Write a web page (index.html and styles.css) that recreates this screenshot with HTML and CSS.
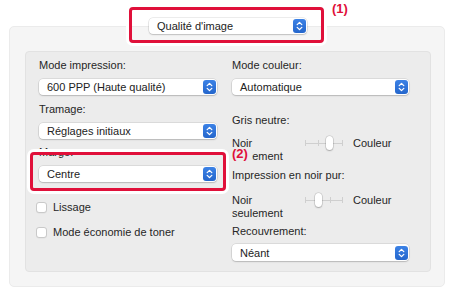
FILE: index.html
```html
<!DOCTYPE html>
<html lang="fr">
<head>
<meta charset="utf-8">
<title>Qualité d'image</title>
<link rel="stylesheet" href="styles.css">
</head>
<body>
<div class="page">
  <div class="top">
    <div class="popup popup-top"><span class="ptext">Qualité d'image</span><span class="stepper"><svg viewBox="0 0 13 14" width="13" height="14"><path d="M4.2 5.6 L6.5 3.4 L8.8 5.6 M4.2 8.4 L6.5 10.6 L8.8 8.4" fill="none" stroke="#fff" stroke-width="1.3" stroke-linecap="round" stroke-linejoin="round"/></svg></span></div>
  </div>
  <div class="outer">
    <div class="inner">
      <div class="col col-left">
        <div class="label l1">Mode impression:</div>
        <div class="popup"><span class="ptext">600 PPP (Haute qualité)</span><span class="stepper"><svg viewBox="0 0 13 14" width="13" height="14"><path d="M4.2 5.6 L6.5 3.4 L8.8 5.6 M4.2 8.4 L6.5 10.6 L8.8 8.4" fill="none" stroke="#fff" stroke-width="1.3" stroke-linecap="round" stroke-linejoin="round"/></svg></span></div>
        <div class="label l2">Tramage:</div>
        <div class="popup"><span class="ptext">Réglages initiaux</span><span class="stepper"><svg viewBox="0 0 13 14" width="13" height="14"><path d="M4.2 5.6 L6.5 3.4 L8.8 5.6 M4.2 8.4 L6.5 10.6 L8.8 8.4" fill="none" stroke="#fff" stroke-width="1.3" stroke-linecap="round" stroke-linejoin="round"/></svg></span></div>
        <div class="label l3">Marge:</div>
        <div class="popup"><span class="ptext">Centre</span><span class="stepper"><svg viewBox="0 0 13 14" width="13" height="14"><path d="M4.2 5.6 L6.5 3.4 L8.8 5.6 M4.2 8.4 L6.5 10.6 L8.8 8.4" fill="none" stroke="#fff" stroke-width="1.3" stroke-linecap="round" stroke-linejoin="round"/></svg></span></div>
        <label class="check c1"><span class="box"></span>Lissage</label>
        <label class="check c2"><span class="box"></span>Mode économie de toner</label>
      </div>
      <div class="col col-right">
        <div class="label l1">Mode couleur:</div>
        <div class="popup"><span class="ptext">Automatique</span><span class="stepper"><svg viewBox="0 0 13 14" width="13" height="14"><path d="M4.2 5.6 L6.5 3.4 L8.8 5.6 M4.2 8.4 L6.5 10.6 L8.8 8.4" fill="none" stroke="#fff" stroke-width="1.3" stroke-linecap="round" stroke-linejoin="round"/></svg></span></div>
        <div class="label r2">Gris neutre:</div>
        <div class="slider-row s1">
          <div class="sl-left">Noir<br>seulement</div>
          <div class="slider">
            <span class="track"></span>
            <span class="tick t0"></span><span class="tick t1"></span><span class="tick t2"></span><span class="tick t3"></span>
            <span class="thumb th2"></span>
          </div>
          <div class="sl-right">Couleur</div>
        </div>
        <div class="label r3">Impression en noir pur:</div>
        <div class="slider-row s2">
          <div class="sl-left">Noir<br>seulement</div>
          <div class="slider">
            <span class="track"></span>
            <span class="tick t0"></span><span class="tick t1"></span><span class="tick t2"></span><span class="tick t3"></span>
            <span class="thumb th1"></span>
          </div>
          <div class="sl-right">Couleur</div>
        </div>
        <div class="label r4">Recouvrement:</div>
        <div class="popup"><span class="ptext">Néant</span><span class="stepper"><svg viewBox="0 0 13 14" width="13" height="14"><path d="M4.2 5.6 L6.5 3.4 L8.8 5.6 M4.2 8.4 L6.5 10.6 L8.8 8.4" fill="none" stroke="#fff" stroke-width="1.3" stroke-linecap="round" stroke-linejoin="round"/></svg></span></div>
      </div>
    </div>
  </div>
  <div class="callout callout-1"></div>
  <div class="callnum callnum-1">(1)</div>
  <div class="callout callout-2"></div>
  <div class="callnum callnum-2">(2)</div>
</div>
</body>
</html>
```

FILE: styles.css
```css
* { box-sizing: border-box; }
html, body { margin: 0; padding: 0; background: #ffffff; }
body {
  font-family: "Liberation Sans", Arial, sans-serif;
  font-size: 11px;
  color: #262626;
  width: 452px;
  height: 301px;
  overflow: hidden;
}
.page { position: relative; width: 452px; height: 301px; }

.top { display: flex; justify-content: center; padding-top: 18px; height: 26px; padding-left: 4px; }
.popup-top { width: 158px; }

.outer {
  margin: 0 7px 0 9px;
  height: 261px;
  background: #f5f5f5;
  border: 1px solid #ebebeb;
  border-radius: 5px;
  padding: 24px 13px 14px 15px;
}
.inner {
  height: 221px;
  background: #ececec;
  border: 1px solid #e2e2e2;
  border-radius: 4px;
  padding: 7px 13px 0 13px;
  display: flex;
  gap: 15px;
}
.col { display: flex; flex-direction: column; }
.col-left { width: 178px; }
.col-right { width: 177px; }

.label { line-height: 13px; height: 13px; }
.popup {
  height: 16px;
  background: #ffffff;
  border-radius: 4px;
  box-shadow: 0 0 0 0.5px rgba(0,0,0,0.14), 0 1px 1.5px rgba(0,0,0,0.16);
  display: flex;
  align-items: center;
  justify-content: space-between;
  padding: 0 1px 0 8px;
  margin-top: 7px;
  color: #222;
}
.popup-top { margin-top: 0; }
.ptext { line-height: 16px; }
.stepper {
  width: 13px; height: 14px;
  border-radius: 3px;
  background: linear-gradient(#3c82e6, #2466cc);
  display: block;
}
.stepper svg { display: block; }

.col-left .l2 { margin-top: 8px; }
.col-left .l3 { margin-top: 7px; }
.col-left .l3 + .popup { margin-top: 7px; }

.check { display: flex; align-items: center; line-height: 13px; height: 13px; margin-left: -3px; }
.check .box {
  width: 11px; height: 11px;
  border: 1px solid #c9c9c9;
  border-radius: 3px;
  background: #ffffff;
  margin-right: 6px;
  box-shadow: 0 0.5px 0.5px rgba(0,0,0,0.06);
}
.c1 { margin-top: 19px; }
.c2 { margin-top: 12px; }

.col-right .r2 { margin-top: 19px; }
.slider-row { display: flex; align-items: flex-start; margin-top: 10px; line-height: 12.5px; }
.sl-left { width: 73px; }
.slider { position: relative; width: 38px; height: 14px; margin-top: -1px; }
.sl-right { margin-left: 10px; }
.track { position: absolute; left: 0; right: 0; top: 6.5px; height: 1px; background: #cfcfcf; }
.tick { position: absolute; top: 4px; width: 1px; height: 6px; background: #cfcfcf; }
.t0 { left: 0; } .t1 { left: 12.5px; } .t2 { left: 24.5px; } .t3 { left: 37px; }
.thumb {
  position: absolute; top: 0; width: 7px; height: 14px;
  background: #ffffff; border-radius: 3.5px;
  box-shadow: 0 0 0 0.5px rgba(0,0,0,0.18), 0 1px 1.5px rgba(0,0,0,0.22);
}
.th1 { left: 10px; }
.th2 { left: 21px; }
.col-right .r3 { margin-top: 7px; }
.s2 { margin-top: 12px; }
.col-right .r4 { margin-top: 6px; }
.col-right .r4 + .popup { margin-top: 6px; height: 17px; }

.callout {
  position: absolute;
  border: 3px solid #e0103a;
  border-radius: 4px;
  box-shadow: 0 0 0 3px #ffffff;
}
.callout-1 { left: 129px; top: 7px; width: 195px; height: 36px; }
.callout-2 { left: 30px; top: 152px; width: 196px; height: 39px; }
.callnum {
  position: absolute;
  color: #e0103a;
  font-weight: bold;
  font-size: 13px;
  line-height: 14px;
  font-family: "Liberation Sans", Arial, sans-serif;
}
.callnum-1 { left: 332px; top: 2px; }
.callnum-2 { left: 232px; top: 147px; background: #ececec; padding-right: 4px; }
```
